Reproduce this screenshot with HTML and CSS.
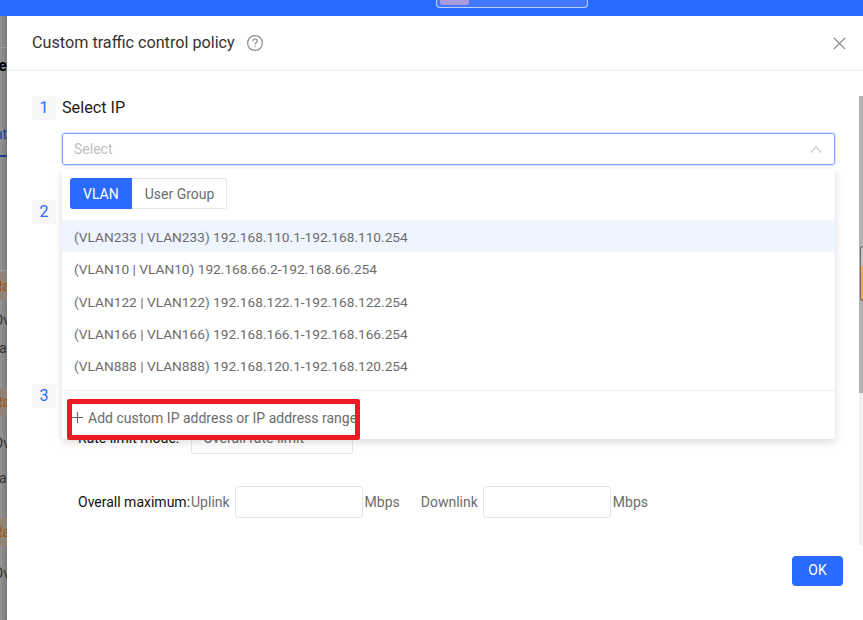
FILE: index.html
```html
<!DOCTYPE html>
<html lang="en">
<head>
    <meta charset="UTF-8">
    <meta name="viewport" content="width=device-width, initial-scale=1.0">
    <title>Custom traffic control policy</title>
    <link rel="stylesheet" href="styles.css">
</head>
<body>
    <div class="topbar">
        <div class="topbar-pill">
            <div class="topbar-pill-fill"></div>
        </div>
    </div>

    <div class="page">
        <!-- what is left of the page behind the modal -->
        <div class="backdrop">
            <div class="backdrop-gap h31"></div>
            <div class="backdrop-band"></div>
            <div class="backdrop-row h36 dark">Ve</div>
            <div class="backdrop-gap h32"></div>
            <div class="backdrop-row h36 link">nt</div>
            <div class="backdrop-gap h3"></div>
            <div class="backdrop-line"></div>
            <div class="backdrop-gap h113"></div>
            <div class="backdrop-divider"></div>
            <div class="backdrop-gap h1"></div>
            <div class="backdrop-row h28 warn">Ra</div>
            <div class="backdrop-gap h10"></div>
            <div class="backdrop-row h20">Ov</div>
            <div class="backdrop-gap h8"></div>
            <div class="backdrop-row h20">a:</div>
            <div class="backdrop-gap h30"></div>
            <div class="backdrop-row h28 warn">Ra</div>
            <div class="backdrop-gap h17"></div>
            <div class="backdrop-row h20">Ov</div>
            <div class="backdrop-gap h15"></div>
            <div class="backdrop-row h20">a:</div>
            <div class="backdrop-gap h30"></div>
            <div class="backdrop-row h28 warn">Ra</div>
            <div class="backdrop-gap h17"></div>
            <div class="backdrop-row h20">Ov</div>
        </div>

        <div class="modal">
            <div class="modal-header">
                <div class="modal-title">Custom traffic control policy</div>
                <svg class="help-icon" viewBox="0 0 16 16" width="16" height="16" fill="none" stroke="#8c8c8c" stroke-width="1.2">
                    <circle cx="8" cy="8" r="7.4"></circle>
                    <path d="M5.7 6.2c0-1.3 1-2.2 2.3-2.2s2.3.9 2.3 2.1c0 1.7-2.3 1.7-2.3 3.5"></path>
                    <path d="M8 10.8v1.3"></path>
                </svg>
                <svg class="close-icon" viewBox="0 0 13 13" width="13" height="13" fill="none" stroke="#808080" stroke-width="1.2">
                    <path d="M.8.8l11.4 11.4M12.2.8L.8 12.2"></path>
                </svg>
            </div>

            <div class="modal-body">
                <div class="step">
                    <div class="step-num">1</div>
                    <div class="step-title">Select IP</div>
                </div>

                <div class="select-wrap">
                    <div class="select-box">
                        <span class="placeholder">Select</span>
                        <svg viewBox="0 0 12 7" width="12" height="7" fill="none" stroke="#c4c4c4" stroke-width="1.1">
                            <path d="M.6 6.5L6 .9l5.4 5.6"></path>
                        </svg>
                    </div>

                    <div class="dropdown">
                        <div class="tabs">
                            <div class="tab active">VLAN</div>
                            <div class="tab">User Group</div>
                        </div>
                        <div class="options">
                            <div class="option hover">(VLAN233 | VLAN233) 192.168.110.1-192.168.110.254</div>
                            <div class="option">(VLAN10 | VLAN10) 192.168.66.2-192.168.66.254</div>
                            <div class="option">(VLAN122 | VLAN122) 192.168.122.1-192.168.122.254</div>
                            <div class="option">(VLAN166 | VLAN166) 192.168.166.1-192.168.166.254</div>
                            <div class="option">(VLAN888 | VLAN888) 192.168.120.1-192.168.120.254</div>
                        </div>
                        <div class="add-row">
                            <svg viewBox="0 0 11 11" width="11" height="11" fill="none" stroke="#666" stroke-width="1.1">
                                <path d="M5.5 0v11M0 5.5h11"></path>
                            </svg>
                            <span>Add custom IP address or IP address range</span>
                            <div class="red-mark"></div>
                        </div>
                    </div>
                </div>

                <div class="step step-two">
                    <div class="step-num">2</div>
                </div>

                <div class="step step-three">
                    <div class="step-num">3</div>
                </div>

                <div class="rate-row">
                    <div class="field-label">Rate limit mode:</div>
                    <div class="rate-select">
                        <span>Overall rate limit</span>
                        <span class="caret"></span>
                    </div>
                </div>

                <div class="max-row">
                    <div class="field-label">Overall maximum:</div>
                    <span class="unit">Uplink</span>
                    <div class="num-input"></div>
                    <span class="unit">Mbps</span>
                    <span class="unit downlink">Downlink</span>
                    <div class="num-input"></div>
                    <span class="unit">Mbps</span>
                </div>

                <div class="footer">
                    <div class="ok-button">OK</div>
                </div>
            </div>

            <div class="scrollbar">
                <div class="scrollbar-thumb"></div>
                <div class="side-tab"></div>
            </div>
        </div>
    </div>
</body>
</html>
```

FILE: styles.css
```css
html, body {
    height: 100%;
    margin: 0;
    overflow: hidden;
}

body {
    display: flex;
    flex-direction: column;
    font-family: Roboto, "Liberation Sans", sans-serif;
    font-size: 14px;
    color: #6c6c6c;
    background-color: #fff;
}

.topbar {
    height: 16px;
    flex-shrink: 0;
    padding-left: 436px;
    box-sizing: border-box;
    background-color: #2b6aff;
}

.topbar-pill {
    width: 152px;
    height: 8px;
    box-sizing: border-box;
    padding-left: 3px;
    background-color: #4479ff;
    border: 1px solid #bcd0fd;
    border-top: none;
    border-radius: 0 0 4px 4px;
}

.topbar-pill-fill {
    width: 29px;
    height: 5px;
    background-color: #a99ade;
    border-radius: 0 0 3px 3px;
}

.page {
    flex: 1;
    display: flex;
    min-height: 0;
}

.backdrop {
    width: 7px;
    flex-shrink: 0;
    overflow: hidden;
    background: linear-gradient(to right, #949494, #7a7a7a);
    color: #333;
    line-height: 20px;
}

.backdrop-row {
    display: flex;
    justify-content: flex-end;
    align-items: center;
    margin-right: -3px;
    white-space: nowrap;
}

.backdrop-row.dark {
    color: #000;
    font-weight: 700;
    font-size: 16px;
    margin-right: 0;
}

.backdrop-row.link {
    color: #1a3f9c;
    margin-right: 0;
}

.backdrop-row.warn {
    color: #a3540c;
    background-color: #8e8376;
}

.backdrop-band {
    height: 1px;
    background-color: #9a9a9a;
}

.backdrop-line {
    height: 2px;
    background-color: #1a3f9c;
}

.backdrop-divider {
    height: 1px;
    background-color: #9c9c9c;
}

.h1 { height: 1px; }
.h3 { height: 3px; }
.h8 { height: 8px; }
.h10 { height: 10px; }
.h15 { height: 15px; }
.h17 { height: 17px; }
.h20 { height: 20px; }
.h28 { height: 28px; }
.h30 { height: 30px; }
.h31 { height: 31px; }
.h32 { height: 32px; }
.h36 { height: 36px; }
.h113 { height: 113px; }

.modal {
    flex: 1;
    min-width: 0;
    position: relative;
    background-color: #fff;
}

.modal-header {
    height: 55px;
    box-sizing: border-box;
    display: flex;
    align-items: center;
    padding: 0 17px 0 25px;
    border-bottom: 2px solid #f4f4f4;
}

.modal-title {
    font-size: 16.2px;
    color: #333;
}

.help-icon {
    margin-left: 12px;
}

.close-icon {
    margin-left: auto;
    margin-top: 2px;
}

.modal-body {
    padding: 25px 28px 0 25px;
}

.step {
    display: flex;
    align-items: center;
    gap: 6px;
}

.step-two {
    margin-top: 35px;
}

.step-three {
    margin-top: 160px;
}

.step-num {
    width: 24px;
    height: 24px;
    line-height: 23px;
    text-align: center;
    font-size: 16px;
    color: #2b6aff;
    background-color: #f6f6f6;
}

.step-title {
    font-size: 16.2px;
    line-height: 22px;
    margin-bottom: 1px;
    color: #1c1c1c;
}

.select-wrap {
    position: relative;
    margin: 13px 0 0 30px;
}

.select-box {
    height: 32px;
    box-sizing: border-box;
    display: flex;
    align-items: center;
    justify-content: space-between;
    padding: 0 12px 0 11px;
    border: 1px solid #7fa5fc;
    border-radius: 3px;
    box-shadow: 0 0 0 1px #d8e4fe;
}

.placeholder {
    color: #bfbfbf;
}

.dropdown {
    position: absolute;
    top: 36px;
    left: 0;
    right: 0;
    height: 270px;
    z-index: 10;
    background-color: #fff;
    border-radius: 3px;
    box-shadow: 0 3px 8px rgba(0, 0, 0, 0.15);
}

.tabs {
    display: flex;
    padding: 9px 8px 11px;
}

.tab {
    height: 31px;
    box-sizing: border-box;
    line-height: 30px;
    padding: 0 12px 0 13px;
    border: 1px solid #e5e5e5;
    border-left: none;
    border-radius: 0 3px 3px 0;
}

.tab.active {
    color: #fff;
    background-color: #2b6aff;
    border-color: #2b6aff;
    border-radius: 3px 0 0 3px;
}

.options {
    height: 170px;
    border-bottom: 1px solid #efefef;
}

.option {
    height: 32.3px;
    line-height: 35px;
    padding-left: 12px;
    font-size: 13.7px;
    white-space: nowrap;
}

.option.hover {
    background-color: #eef5fe;
}

.add-row {
    position: relative;
    height: 49px;
    display: flex;
    align-items: center;
    gap: 5px;
    padding: 4px 0 0 10px;
    box-sizing: border-box;
}

/* red annotation drawn on top of the screenshot */
.red-mark {
    position: absolute;
    left: 5px;
    top: 8px;
    width: 293px;
    height: 41px;
    box-sizing: border-box;
    border: 5px solid #ed1c24;
    border-radius: 2px;
}

.rate-row {
    display: flex;
    align-items: center;
    height: 32px;
    margin: 14px 0 0 46px;
}

.field-label {
    margin-right: 1px;
    color: #111;
    white-space: nowrap;
}

.rate-select {
    width: 162px;
    height: 32px;
    box-sizing: border-box;
    display: flex;
    align-items: center;
    justify-content: space-between;
    margin-left: 11px;
    padding: 0 12px 0 11px;
    border: 1px solid #e5e5e5;
    border-radius: 3px;
}

.caret {
    width: 0;
    height: 0;
    border: 3px solid transparent;
    border-top: 4px solid #bbb;
    border-bottom: none;
}

.max-row {
    display: flex;
    align-items: center;
    height: 32px;
    margin: 32px 0 0 46px;
}

.num-input {
    width: 128px;
    height: 32px;
    box-sizing: border-box;
    margin: 0 2px 0 5px;
    border: 1px solid #e5e5e5;
    border-radius: 3px;
}

.downlink {
    margin-left: 21px;
}

.footer {
    display: flex;
    justify-content: flex-end;
    margin: 38px -8px 0 0;
}

.ok-button {
    width: 51px;
    height: 30px;
    line-height: 28px;
    text-align: center;
    color: #fff;
    background-color: #2b6aff;
    border-radius: 4px;
}

.scrollbar {
    position: absolute;
    top: 80px;
    right: 0;
    width: 4px;
    height: 449px;
    background-color: #f1f1f1;
}

.scrollbar-thumb {
    height: 297px;
    background-color: #b2b2b2;
}

.side-tab {
    position: absolute;
    top: 150px;
    right: 0;
    width: 3px;
    height: 55px;
    box-sizing: border-box;
    border: 1px solid #6e6e6e;
    border-right: none;
    border-radius: 3px 0 0 3px;
    background: linear-gradient(to bottom, #c4c4c4 35%, #f4a95c 35%);
}
```
